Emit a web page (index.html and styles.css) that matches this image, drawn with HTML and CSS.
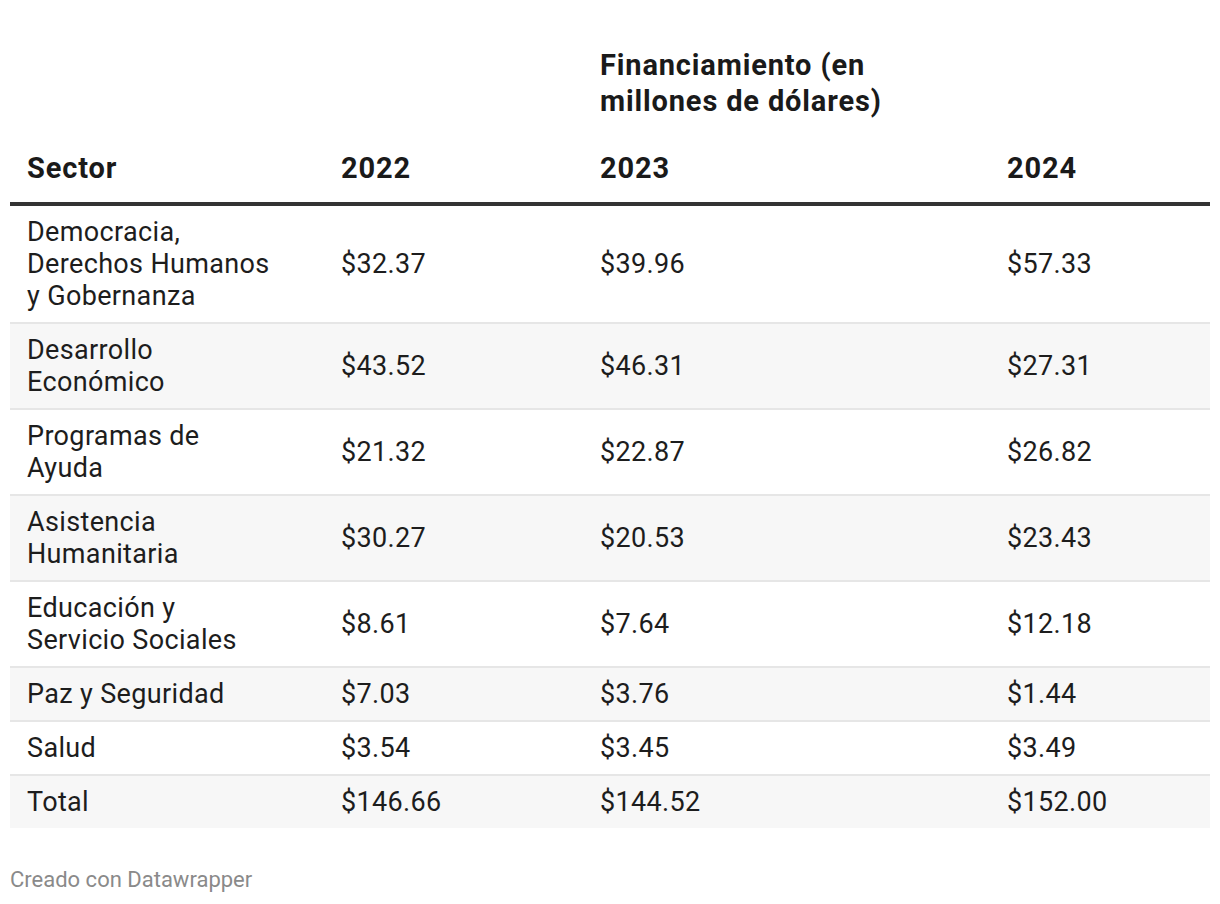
FILE: index.html
```html
<!DOCTYPE html>
<html lang="es">
<head>
<meta charset="utf-8">
<title>Financiamiento por sector</title>
<link rel="stylesheet" href="styles.css">
</head>
<body>
<div class="chart">
  <table class="dw-table">
    <colgroup>
      <col class="c1"><col class="c2"><col class="c3"><col class="c4">
    </colgroup>
    <thead>
      <tr class="group-row">
        <th colspan="2"></th>
        <th class="group">Financiamiento (en<br>millones de dólares)</th>
        <th></th>
      </tr>
      <tr class="head-row">
        <th>Sector</th>
        <th>2022</th>
        <th>2023</th>
        <th>2024</th>
      </tr>
    </thead>
    <tbody>
      <tr><td>Democracia,<br>Derechos Humanos<br>y Gobernanza</td><td>$32.37</td><td>$39.96</td><td>$57.33</td></tr>
      <tr class="alt"><td>Desarrollo<br>Económico</td><td>$43.52</td><td>$46.31</td><td>$27.31</td></tr>
      <tr><td>Programas de<br>Ayuda</td><td>$21.32</td><td>$22.87</td><td>$26.82</td></tr>
      <tr class="alt"><td>Asistencia<br>Humanitaria</td><td>$30.27</td><td>$20.53</td><td>$23.43</td></tr>
      <tr><td>Educación y<br>Servicio Sociales</td><td>$8.61</td><td>$7.64</td><td>$12.18</td></tr>
      <tr class="alt"><td>Paz y Seguridad</td><td>$7.03</td><td>$3.76</td><td>$1.44</td></tr>
      <tr><td>Salud</td><td>$3.54</td><td>$3.45</td><td>$3.49</td></tr>
      <tr class="alt last"><td>Total</td><td>$146.66</td><td>$144.52</td><td>$152.00</td></tr>
    </tbody>
  </table>
  <div class="footer">Creado con Datawrapper</div>
</div>
</body>
</html>
```

FILE: styles.css
```css
html, body {
  margin: 0;
  padding: 0;
  background: #ffffff;
}

body {
  font-family: Roboto, "Liberation Sans", Arial, sans-serif;
  color: #1d1d1d;
}

.chart {
  padding: 47px 10px 0 10px;
}

.dw-table {
  width: 1200px;
  table-layout: fixed;
  border-collapse: separate;
  border-spacing: 0;
}

.c1 { width: 314px; }
.c2 { width: 259px; }
.c3 { width: 407px; }
.c4 { width: 220px; }

.dw-table th {
  text-align: left;
  font-weight: 700;
  font-size: 29px;
  line-height: 36px;
  letter-spacing: 0.85px;
  color: #1a1a1a;
  padding: 0 17px;
  vertical-align: bottom;
}

.group-row th {
  padding-top: 0;
  padding-bottom: 0;
}

.head-row th {
  padding-top: 31px;
  padding-bottom: 16px;
  border-bottom: 4px solid #333333;
}

.dw-table td {
  font-size: 27px;
  line-height: 32px;
  letter-spacing: 0.35px;
  padding: 10px 17px;
  vertical-align: middle;
  border-bottom: 2px solid #e6e6e6;
  color: #1d1d1d;
}

.dw-table tr.alt td {
  background: #f7f7f7;
}

.dw-table tr.last td {
  border-bottom: none;
}

.footer {
  margin-top: 38px;
  font-size: 22px;
  line-height: 28px;
  color: #8a8a8a;
}
```
